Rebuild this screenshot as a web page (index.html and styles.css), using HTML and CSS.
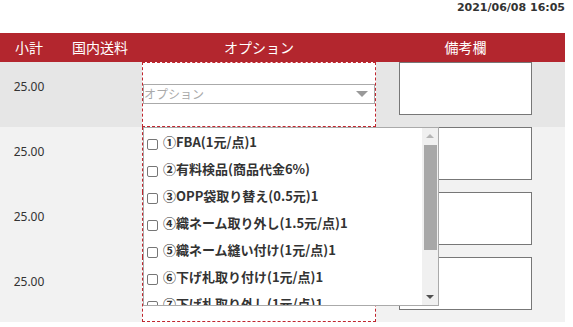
FILE: index.html
```html
<!DOCTYPE html>
<html lang="ja">
<head>
    <meta charset="UTF-8">
    <meta name="viewport" content="width=device-width, initial-scale=1.0">
    <title>注文明細</title>
    <link rel="stylesheet" href="styles.css">
</head>
<body>

    <div class="sheet">
        <div class="stamp">2021/06/08 16:05</div>

        <div class="thead">
            <div class="th">小計</div>
            <div class="th">国内送料</div>
            <div class="th">オプション</div>
            <div class="th th-note">備考欄</div>
        </div>

        <div class="row row-current">
            <div class="cell cell-sub">25.00</div>
            <div class="cell"></div>
            <div class="cell cell-opt">
                <div class="picker">
                    <span class="placeholder">オプション</span>
                    <span class="caret"></span>
                </div>

                <div class="dropdown">
                    <ul class="choices">
                        <li><input type="checkbox" id="op1"><label for="op1">①FBA(1元/点)1</label></li>
                        <li><input type="checkbox" id="op2"><label for="op2">②有料検品(商品代金6%)</label></li>
                        <li><input type="checkbox" id="op3"><label for="op3">③OPP袋取り替え(0.5元)1</label></li>
                        <li><input type="checkbox" id="op4"><label for="op4">④織ネーム取り外し(1.5元/点)1</label></li>
                        <li><input type="checkbox" id="op5"><label for="op5">⑤織ネーム縫い付け(1元/点)1</label></li>
                        <li><input type="checkbox" id="op6"><label for="op6">⑥下げ札取り付け(1元/点)1</label></li>
                        <li><input type="checkbox" id="op7"><label for="op7">⑦下げ札取り外し(1元/点)1</label></li>
                    </ul>
                    <div class="scrollbar">
                        <span class="arrow arrow-up"></span>
                        <span class="thumb"></span>
                        <span class="arrow arrow-down"></span>
                    </div>
                </div>
            </div>
            <div class="cell cell-note"><textarea class="memo"></textarea></div>
        </div>

        <div class="row">
            <div class="cell cell-sub">25.00</div>
            <div class="cell"></div>
            <div class="cell cell-opt"></div>
            <div class="cell cell-note"><textarea class="memo"></textarea></div>
        </div>

        <div class="row">
            <div class="cell cell-sub">25.00</div>
            <div class="cell"></div>
            <div class="cell cell-opt"></div>
            <div class="cell cell-note"><textarea class="memo"></textarea></div>
        </div>

        <div class="row">
            <div class="cell cell-sub">25.00</div>
            <div class="cell"></div>
            <div class="cell cell-opt"></div>
            <div class="cell cell-note"><textarea class="memo"></textarea></div>
        </div>
    </div>

</body>
</html>
```

FILE: styles.css
```css
body {
    margin: 0;
    padding: 0;
    background-color: #fff;
    font-family: "Noto Sans CJK JP", "Noto Sans", sans-serif;
    color: #333;
}

.sheet {
    width: 565px;
}

.stamp {
    height: 33px;
    padding-top: 1px;
    box-sizing: border-box;
    text-align: right;
    font-family: "DejaVu Sans", sans-serif;
    font-weight: bold;
    font-size: 11px;
    line-height: 13px;
    color: #333;
}

.thead,
.row {
    display: grid;
    grid-template-columns: 58px 84px 234px 1fr;
}

.thead {
    height: 29px;
    background-color: #b3262e;
    color: #fff;
    font-size: 14px;
    line-height: 29px;
}

.th {
    text-align: center;
}

.th-note {
    padding-right: 10px;
}

.row {
    height: 65px;
    background-color: #f2f2f2;
}

.row-current {
    background-color: #e6e6e6;
}

.cell-sub {
    padding-top: 16px;
    text-align: center;
    font-family: "Noto Sans", sans-serif;
    font-size: 12px;
    line-height: 17px;
}

.cell-opt {
    position: relative;
    background-color: #fff;
    border: 1px dashed #c0262e;
}

.picker {
    display: flex;
    align-items: center;
    justify-content: space-between;
    height: 20px;
    margin-top: 21px;
    border: 1px solid #aaa;
    box-sizing: border-box;
    background-color: #fff;
}

.placeholder {
    font-size: 12px;
    line-height: 18px;
    color: #aaa;
}

.caret {
    width: 0;
    height: 0;
    margin-right: 6px;
    border-left: 6px solid transparent;
    border-right: 6px solid transparent;
    border-top: 6px solid #999;
}

.dropdown {
    position: absolute;
    z-index: 2;
    top: 64px;
    left: 0;
    width: 296px;
    height: 179px;
    border: 1px solid #aaa;
    box-sizing: border-box;
    background-color: #fff;
    overflow: hidden;
}

.choices {
    list-style: none;
    margin: 0;
    padding: 0;
    width: 278px;
}

.choices li {
    display: flex;
    align-items: center;
    height: 27px;
    white-space: nowrap;
}

.choices input {
    appearance: none;
    width: 11px;
    height: 11px;
    margin: 5px 5px 0 3px;
    border: 1px solid #767676;
    border-radius: 2px;
    background-color: #fff;
    box-sizing: border-box;
}

.choices label {
    font-size: 13px;
    font-weight: bold;
    line-height: 17px;
    color: #333;
}

.scrollbar {
    position: absolute;
    top: 0;
    right: 0;
    width: 16px;
    height: 100%;
    background-color: #f0f0f0;
}

.thumb {
    position: absolute;
    top: 17px;
    left: 2px;
    width: 13px;
    height: 105px;
    background-color: #a8a8a8;
}

.arrow {
    position: absolute;
    left: 4px;
    width: 0;
    height: 0;
    border-left: 4px solid transparent;
    border-right: 4px solid transparent;
}

.arrow-up {
    top: 6px;
    border-bottom: 4px solid #b5b5b5;
}

.arrow-down {
    bottom: 6px;
    border-top: 4px solid #505050;
}

.cell-note {
    padding-left: 23px;
}

.memo {
    display: block;
    width: 133px;
    height: 53px;
    margin: 0;
    padding: 0;
    border: 1px solid #777;
    box-sizing: border-box;
    resize: none;
    background-color: #fff;
}
```
